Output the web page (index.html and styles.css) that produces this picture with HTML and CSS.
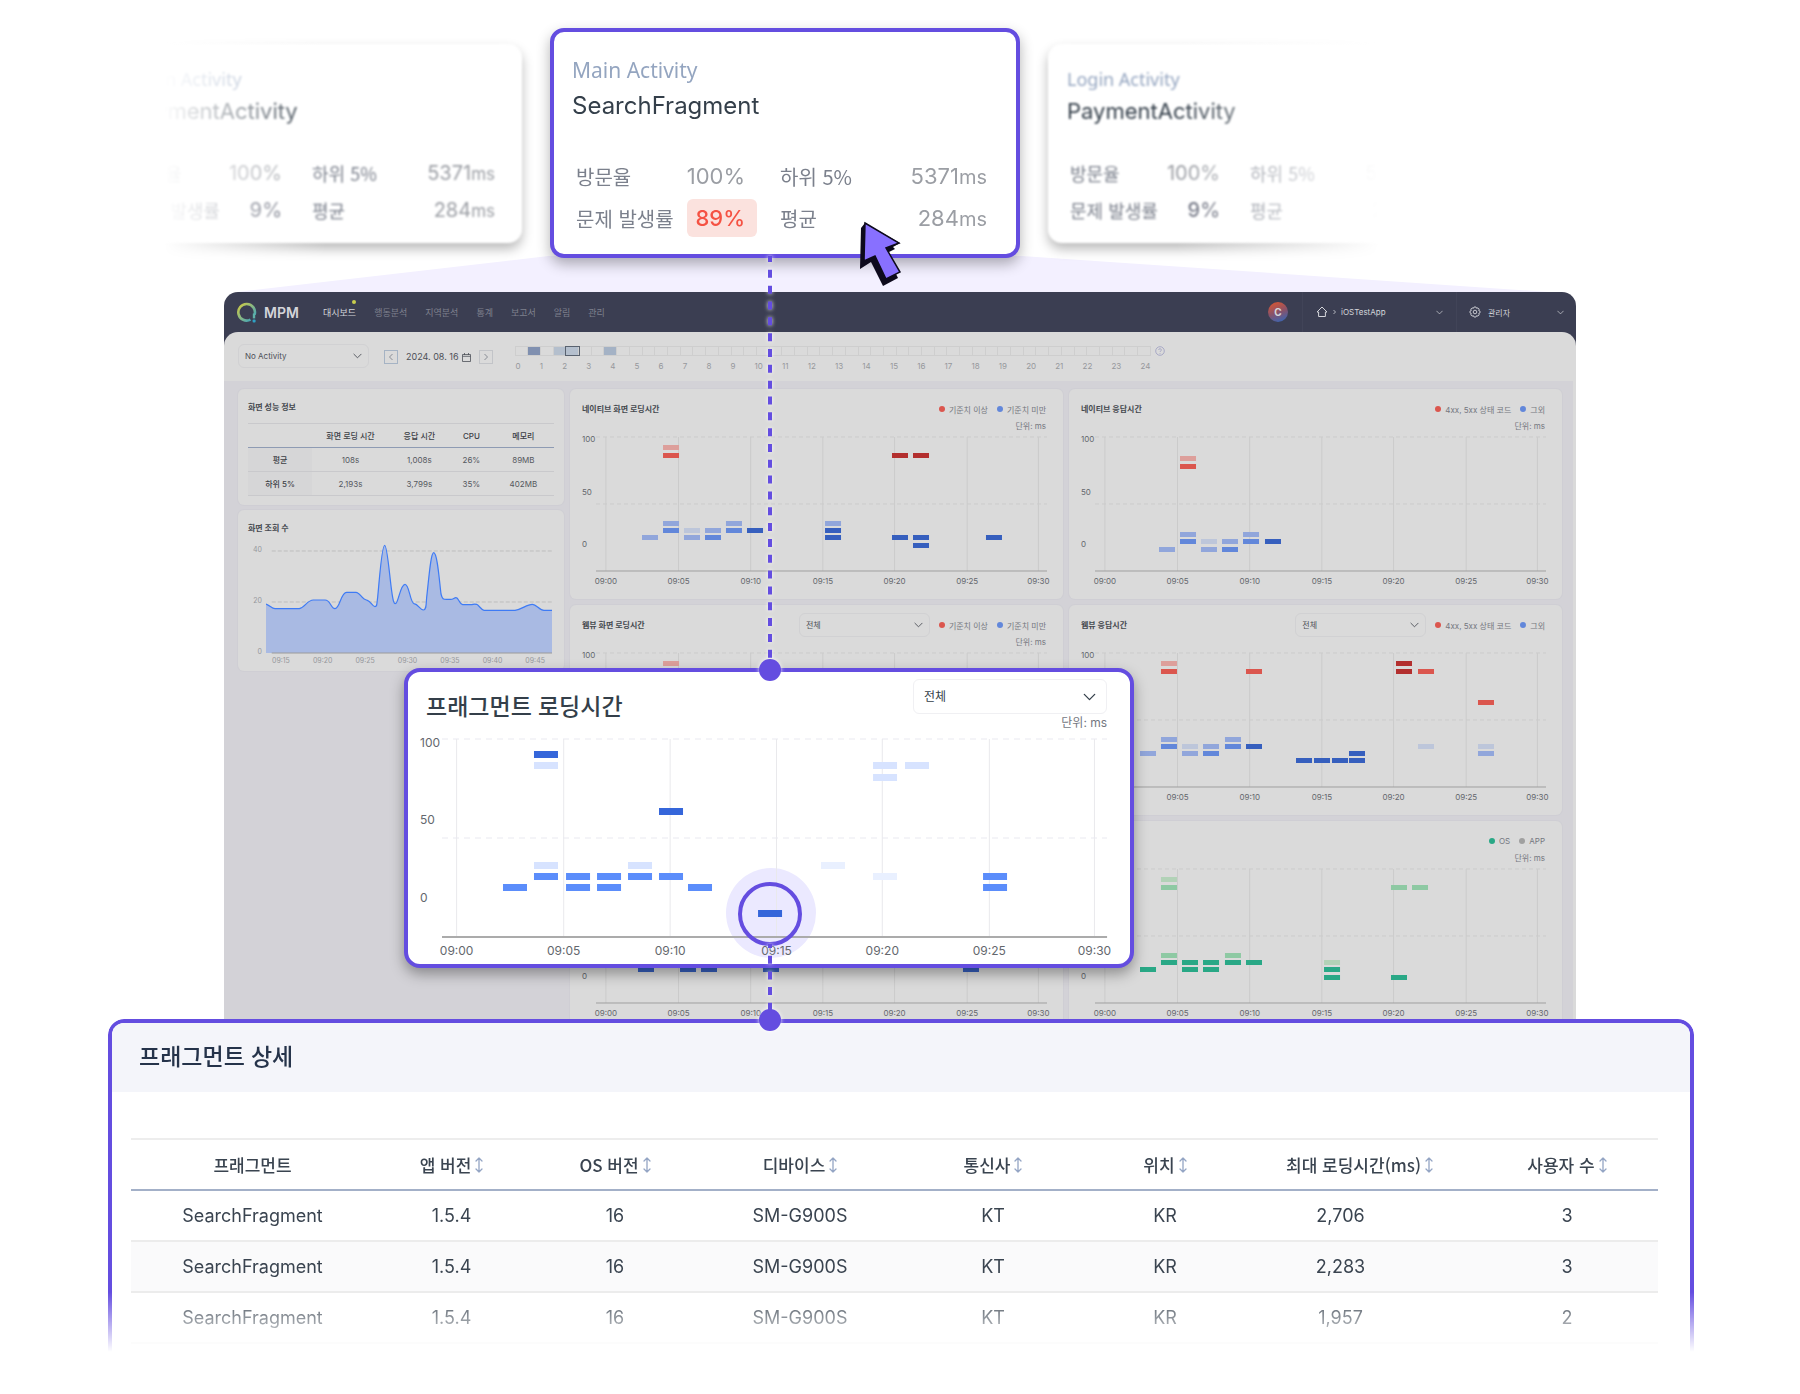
FILE: index.html
```html
<!DOCTYPE html>
<html lang="ko">
<head>
<meta charset="utf-8">
<meta name="viewport" content="width=device-width, initial-scale=1">
<title>MPM 대시보드</title>
<link rel="stylesheet" href="styles.css">
</head>
<body>
<svg class="sprite" aria-hidden="true">
  <symbol id="chevron" viewBox="0 0 10 6"><path d="M1 1l4 4 4-4" fill="none" stroke="currentColor" stroke-linecap="round" stroke-linejoin="round"/></symbol>
  <symbol id="sort" viewBox="0 0 8 16"><path d="M4 1v14M1 4l3-3 3 3M1 12l3 3 3-3" fill="none" stroke="currentColor" stroke-width="1.3" stroke-linecap="round" stroke-linejoin="round"/></symbol>
</svg>
<main class="scene">

  <section class="carousel" aria-label="액티비티">
    <article class="activity activity-side">
      <p class="activity-kind">Login Activity</p>
      <h2 class="activity-name">PaymentActivity</h2>
      <dl class="stats">
        <dt>방문율</dt><dd>100%</dd>
        <dt>하위 5%</dt><dd>5371<small>ms</small></dd>
        <dt>문제 발생률</dt><dd class="strong">9%</dd>
        <dt>평균</dt><dd>284<small>ms</small></dd>
      </dl>
    </article>
    <article class="activity activity-main">
      <p class="activity-kind">Main Activity</p>
      <h2 class="activity-name">SearchFragment</h2>
      <dl class="stats">
        <dt>방문율</dt><dd>100%</dd>
        <dt>하위 5%</dt><dd>5371<small>ms</small></dd>
        <dt>문제 발생률</dt><dd><span class="alert">89%</span></dd>
        <dt>평균</dt><dd>284<small>ms</small></dd>
      </dl>
      <svg class="cursor" viewBox="0 0 44 68" aria-hidden="true">
        <path d="M7 2L3 7L2 48L13 41L25 65L40 57L38 53L41 51L29 32L37 28L35 26L42 22Z" fill="#0d0a1c"/>
        <path d="M7 2L41 22L28 27L42 51L28 58L17 35L6 40Z" fill="#8870ff" stroke="#0d0a1c" stroke-width="1.5"/>
      </svg>
    </article>
    <article class="activity activity-side">
      <p class="activity-kind">Login Activity</p>
      <h2 class="activity-name">PaymentActivity</h2>
      <dl class="stats">
        <dt>방문율</dt><dd>100%</dd>
        <dt>하위 5%</dt><dd>5371<small>ms</small></dd>
        <dt>문제 발생률</dt><dd class="strong">9%</dd>
        <dt>평균</dt><dd>284<small>ms</small></dd>
      </dl>
    </article>
  </section>

  <div class="beam"></div>

  <section class="dashboard">
    <header class="topbar">
      <a class="brand" href="#">
        <svg class="brand-mark" viewBox="0 0 20 21" aria-hidden="true">
          <defs><linearGradient id="ring" x1="0" y1="0" x2="1" y2="1"><stop offset="0.1" stop-color="#c3c84e"/><stop offset="0.55" stop-color="#7fb58c"/><stop offset="1" stop-color="#2fa0c4"/></linearGradient></defs>
          <path d="M13.5 17.6A8.3 8.3 0 1 1 17.6 12.6" fill="none" stroke="url(#ring)" stroke-width="2.6"/>
          <path d="M17 11.5V16.4" stroke="#5fb0a8" stroke-width="2.4"/>
          <rect x="15.6" y="17.6" width="3" height="3" rx="1" fill="#2fa0c4"/>
        </svg>
        <span>MPM</span>
      </a>
      <nav class="menu">
        <a class="active" href="#">대시보드</a><a href="#">행동분석</a><a href="#">지역분석</a><a href="#">통계</a><a href="#">보고서</a><a href="#">알림</a><a href="#">관리</a>
      </nav>
      <span class="avatar">C</span>
      <button class="top-select app-select" type="button">
        <svg width="12" height="12" viewBox="0 0 12 12" aria-hidden="true"><path d="M6 1L11 6H9.4V10.5H2.6V6H1Z" fill="none" stroke="currentColor" stroke-linejoin="round"/></svg>
        <svg width="3" height="6" viewBox="0 0 3 6" aria-hidden="true"><path d="M.5 1L2.5 3L.5 5" fill="none" stroke="currentColor" stroke-width=".8"/></svg>
        <span>iOSTestApp</span>
        <svg class="push" width="7" height="5"><use href="#chevron"/></svg>
      </button>
      <button class="top-select user-select" type="button">
        <svg width="12" height="12" viewBox="0 0 12 12" fill="none" stroke="currentColor" aria-hidden="true"><path d="M5 1H7L7.6 2.3L9 1.9L10.2 3.1L9.7 4.5L11 5.1V6.9L9.7 7.5L10.2 8.9L9 10.1L7.6 9.7L7 11H5L4.4 9.7L3 10.1L1.8 8.9L2.3 7.5L1 6.9V5.1L2.3 4.5L1.8 3.1L3 1.9L4.4 2.3Z" stroke-width=".9" stroke-linejoin="round"/><circle cx="6" cy="6" r="1.8" stroke-width=".9"/></svg>
        <span>관리자</span>
        <svg class="push" width="7" height="5"><use href="#chevron"/></svg>
      </button>
    </header>

    <div class="toolbar">
      <div class="select small-select">
        <select aria-label="액티비티 선택"><option>No Activity</option></select>
        <svg width="9" height="6"><use href="#chevron"/></svg>
      </div>
      <div class="date-picker">
        <button class="step step-prev" type="button" aria-label="이전 날짜"><svg width="4" height="8" viewBox="0 0 4 8"><path d="M3.5 1L.5 4L3.5 7" fill="none" stroke="currentColor"/></svg></button>
        <span class="date">2024. 08. 16
          <svg width="9" height="9" viewBox="0 0 9 9" aria-hidden="true"><path d="M.5 1.5H8.5V8.5H.5ZM.5 3.3H8.5M2.5 0V2M6.5 0V2" fill="none" stroke="currentColor" stroke-width=".8"/></svg>
        </span>
        <button class="step" type="button" aria-label="다음 날짜"><svg width="4" height="8" viewBox="0 0 4 8"><path d="M.5 1L3.5 4L.5 7" fill="none" stroke="currentColor"/></svg></button>
      </div>
      <div class="timeline">
        <div class="cells" id="cells"></div>
        <div class="hours" id="hours"></div>
      </div>
      <svg class="help" viewBox="0 0 10 10" aria-hidden="true"><circle cx="5" cy="5" r="4.3" fill="none" stroke="currentColor" stroke-width=".8"/><path d="M3.7 4a1.3 1.3 0 1 1 1.8 1.2q-.5.2-.5.8M5 7v.8" fill="none" stroke="currentColor" stroke-width=".8"/></svg>
    </div>

    <div class="board">
      <div class="side">
        <section class="panel summary">
          <h3>화면 성능 정보</h3>
          <table class="summary-table">
            <thead><tr><th></th><th>화면 로딩 시간</th><th>응답 시간</th><th>CPU</th><th>메모리</th></tr></thead>
            <tbody>
              <tr><th scope="row">평균</th><td>108s</td><td>1,008s</td><td>26%</td><td>89MB</td></tr>
              <tr><th scope="row">하위 5%</th><td>2,193s</td><td>3,799s</td><td>35%</td><td>402MB</td></tr>
            </tbody>
          </table>
        </section>
        <section class="panel views">
          <h3>화면 조회 수</h3>
          <div class="views-body">
            <div class="views-axis"><span>40</span><span>20</span><span>0</span></div>
            <svg class="views-plot" aria-hidden="true">
              <line class="dash" x1="2%" x2="100%" y1="7" y2="7"/>
              <line class="dash" x1="2%" x2="100%" y1="58" y2="58"/>
              <svg width="100%" height="109" viewBox="168 190 858 327" preserveAspectRatio="none">
                <path class="area" d="M168 370C180 374 185 384 195 384L268 384C285 380 292 358 310 358L345 358C362 358 362 384 375 384C390 384 392 335 410 335L438 335C450 335 455 357 472 359C482 362 488 378 495 378C502 378 500 370 503 350C508 300 515 194 524 194C533 194 540 310 548 350C551 370 555 370 558 368C566 360 572 311 585 311C598 311 600 365 612 369C625 371 630 388 640 388C650 388 648 370 650 350C656 300 662 216 671 216C682 216 688 300 693 340C697 356 700 356 710 356L722 356C730 356 732 351 738 351C746 351 748 371 758 372L785 372C792 369 796 370 800 371C808 375 814 388 822 389L915 389C935 387 950 371 967 371C980 371 988 389 1002 389L1026 389V517H168Z"/>
                <path class="curve" d="M168 370C180 374 185 384 195 384L268 384C285 380 292 358 310 358L345 358C362 358 362 384 375 384C390 384 392 335 410 335L438 335C450 335 455 357 472 359C482 362 488 378 495 378C502 378 500 370 503 350C508 300 515 194 524 194C533 194 540 310 548 350C551 370 555 370 558 368C566 360 572 311 585 311C598 311 600 365 612 369C625 371 630 388 640 388C650 388 648 370 650 350C656 300 662 216 671 216C682 216 688 300 693 340C697 356 700 356 710 356L722 356C730 356 732 351 738 351C746 351 748 371 758 372L785 372C792 369 796 370 800 371C808 375 814 388 822 389L915 389C935 387 950 371 967 371C980 371 988 389 1002 389L1026 389"/>
              </svg>
              <line class="base" x1="2%" x2="100%" y1="109" y2="109"/>
            </svg>
          </div>
          <div class="views-times"><span>09:15</span><span>09:20</span><span>09:25</span><span>09:30</span><span>09:35</span><span>09:40</span><span>09:45</span></div>
        </section>
      </div>

      <div class="grid">
        <section class="panel chart">
          <header><h3>네이티브 화면 로딩시간</h3><span class="key red">기준치 이상</span><span class="key blue">기준치 미만</span></header>
          <p class="unit">단위: ms</p>
          <svg class="plot" data-chart="nativeLoad"></svg>
        </section>
        <section class="panel chart">
          <header><h3>네이티브 응답시간</h3><span class="key red">4xx, 5xx 상태 코드</span><span class="key blue">그외</span></header>
          <p class="unit">단위: ms</p>
          <svg class="plot" data-chart="nativeResponse"></svg>
        </section>
        <section class="panel chart">
          <header><h3>웹뷰 화면 로딩시간</h3>
            <div class="select small-select"><select aria-label="웹뷰 화면"><option>전체</option></select><svg width="9" height="6"><use href="#chevron"/></svg></div>
            <span class="key red">기준치 이상</span><span class="key blue">기준치 미만</span></header>
          <p class="unit">단위: ms</p>
          <svg class="plot" data-chart="webLoad"></svg>
        </section>
        <section class="panel chart">
          <header><h3>웹뷰 응답시간</h3>
            <div class="select small-select"><select aria-label="웹뷰 응답"><option>전체</option></select><svg width="9" height="6"><use href="#chevron"/></svg></div>
            <span class="key red">4xx, 5xx 상태 코드</span><span class="key blue">그외</span></header>
          <p class="unit"></p>
          <svg class="plot" data-chart="webResponse"></svg>
        </section>
        <section class="panel chart">
          <header></header>
          <p class="unit"></p>
          <svg class="plot" data-chart="cpu"></svg>
        </section>
        <section class="panel chart">
          <header><span class="key green">OS</span><span class="key grey">APP</span></header>
          <p class="unit">단위: ms</p>
          <svg class="plot" data-chart="memory"></svg>
        </section>
      </div>
    </div>

    <section class="popup">
      <header>
        <h2>프래그먼트 로딩시간</h2>
        <div class="popup-filter">
          <div class="select large-select"><select aria-label="프래그먼트"><option>전체</option></select><svg width="13" height="8"><use href="#chevron"/></svg></div>
          <p class="unit">단위: ms</p>
        </div>
      </header>
      <div class="halo"></div>
      <svg class="plot plot-large" data-chart="fragment"></svg>
      <div class="ring"></div>
    </section>
    <svg class="connector connector-top" aria-hidden="true">
      <line x1="13" x2="13" y1="0" y2="414" stroke-dasharray="8 7.83" stroke-dashoffset="2"/><circle cx="13" cy="414" r="11"/>
    </svg>
    <svg class="connector connector-bottom" aria-hidden="true">
      <line x1="13" x2="13" y1="0" y2="76" stroke-dasharray="8 7.7" stroke-dashoffset="4"/><circle cx="13" cy="76" r="11"/>
    </svg>
  </section>

  <section class="detail">
    <header><h2>프래그먼트 상세</h2></header>
    <table class="detail-table">
      <colgroup><col class="c-fragment"><col class="c-app"><col class="c-os"><col class="c-device"><col class="c-carrier"><col class="c-place"><col class="c-time"><col class="c-users"></colgroup>
      <thead><tr>
        <th>프래그먼트</th>
        <th><button type="button">앱 버전<svg><use href="#sort"/></svg></button></th>
        <th><button type="button">OS 버전<svg><use href="#sort"/></svg></button></th>
        <th><button type="button">디바이스<svg><use href="#sort"/></svg></button></th>
        <th><button type="button">통신사<svg><use href="#sort"/></svg></button></th>
        <th><button type="button">위치<svg><use href="#sort"/></svg></button></th>
        <th><button type="button">최대 로딩시간(ms)<svg><use href="#sort"/></svg></button></th>
        <th><button type="button">사용자 수<svg><use href="#sort"/></svg></button></th>
      </tr></thead>
      <tbody>
        <tr><td>SearchFragment</td><td>1.5.4</td><td>16</td><td>SM-G900S</td><td>KT</td><td>KR</td><td class="time">2,706</td><td>3</td></tr>
        <tr><td>SearchFragment</td><td>1.5.4</td><td>16</td><td>SM-G900S</td><td>KT</td><td>KR</td><td class="time">2,283</td><td>3</td></tr>
        <tr><td>SearchFragment</td><td>1.5.4</td><td>16</td><td>SM-G900S</td><td>KT</td><td>KR</td><td class="time">1,957</td><td>2</td></tr>
      </tbody>
    </table>
  </section>
</main>
<script src="charts.js"></script>
</body>
</html>
```
FILE: styles.css
```css
:root {
  --violet: #644de0;
  --card: #dadada;
  --ink: #343f4a;
  --cjk: "Noto Sans CJK KR", sans-serif;
  --ui: Inter, "Noto Sans CJK KR", sans-serif;
}
* { box-sizing: border-box; }
body { margin: 0; background: #fff; font-family: var(--ui); color: var(--ink); }
h2, h3, p, dl, dd { margin: 0; font-weight: 400; }
button, select { font: inherit; color: inherit; background: none; border: 0; padding: 0; margin: 0; }
a { color: inherit; text-decoration: none; }
table { border-collapse: collapse; width: 100%; table-layout: fixed; }
.sprite { display: none; }
.scene { min-width: 1500px; overflow: hidden; }

/* activity cards */
.carousel {
  position: relative; z-index: 2; display: flex; align-items: center; gap: 28px;
  width: max-content; margin-left: 110px; padding: 28px 0 36px;
  -webkit-mask-image: linear-gradient(to right, transparent 4%, #000 16%, #000 79%, transparent 94%);
  mask-image: linear-gradient(to right, transparent 4%, #000 16%, #000 79%, transparent 94%);
}
.activity { background: #fff; border-radius: 14px; }
.activity-kind { font-family: "Noto Sans", sans-serif; color: #94a5c0; }
.activity-main { position: relative; width: 470px; height: 230px; padding: 24px 29px 0 18px; border: 4px solid var(--violet); box-shadow: 0 6px 14px rgba(0, 0, 0, .3); }
.activity-main .activity-kind { font-size: 21px; line-height: 28px; }
.activity-main .activity-name { font-size: 24px; line-height: 44px; }
.stats { display: grid; align-items: center; color: #9b9ea4; }
.stats dt { font-family: var(--cjk); color: #7b808c; white-space: nowrap; }
.stats dd { text-align: right; }
.activity-main .stats { grid-template-columns: 102px 67px 72px 1fr; grid-auto-rows: 42px; padding-left: 4px; margin-top: 27px; font-size: 22px; }
.activity-main .stats dt { font-size: 20px; }
.activity-main .stats dt:nth-of-type(even) { margin-left: 35px; }
.activity-main small { font-size: 20px; }
.alert { display: inline-block; margin: 0 -12px 0 -8px; padding: 0 12px 0 8px; line-height: 38px; border-radius: 6px; background: #fbe2de; color: #f55243; font-weight: 500; }
.activity-side { flex: none; width: 412px; height: 199px; padding: 22px 27px 0 19px; box-shadow: 0 6px 12px rgba(0, 0, 0, .28); filter: blur(1px); }
.activity-side .activity-kind { font-size: 18px; line-height: 26px; }
.activity-side .activity-name { font-size: 22px; line-height: 38px; }
.activity-side .stats { grid-template-columns: 92px 58px 72px 1fr; grid-auto-rows: 37px; padding-left: 3px; margin-top: 25px; font-size: 20px; }
.activity-side .stats dt { font-size: 18px; }
.activity-side .stats dt:nth-of-type(even) { margin-left: 30px; }
.activity-side small { font-size: 17px; }
.stats .strong { color: #6e7280; font-weight: 500; }
.cursor { position: absolute; left: 304px; top: 189px; width: 44px; height: 68px; }

.beam { height: 36px; margin: -38px 224px 0; background: #f3f0ff; clip-path: polygon(1% 100%, 24% 0, 59% 0, 98% 100%); }

/* dashboard shell */
.dashboard { position: relative; margin: 0 224px; background: #3b3e52; border-radius: 14px 14px 0 0; }
.topbar { display: flex; align-items: center; height: 40px; padding-left: 13px; color: #d4d5da; font-size: 9px; }
.brand { display: flex; align-items: center; gap: 7px; width: 86px; font-size: 14px; font-weight: 600; }
.brand-mark { width: 20px; height: 21px; }
.menu { display: flex; gap: 18px; color: #7f818e; }
.menu .active { position: relative; color: #d4d5da; }
.menu .active::after { content: ""; position: absolute; right: 0; top: -6px; width: 4px; height: 4px; border-radius: 50%; background: #c9ce4d; }
.avatar { margin-left: auto; margin-right: 14px; width: 20px; height: 20px; border-radius: 50%; background: linear-gradient(160deg, #c8553d 15%, #8a5268 50%, #3466b8 95%); font-size: 10px; line-height: 20px; font-weight: 700; text-align: center; }
.top-select { display: flex; align-items: center; gap: 5px; height: 40px; border-left: 1px solid #414458; font-size: 8px; }
.app-select { width: 154px; padding: 0 13px; }
.user-select { width: 120px; padding: 0 12px; gap: 7px; }
.push { margin-left: auto; }
.toolbar { display: flex; align-items: flex-start; height: 49px; padding: 12px 14px 0; background: var(--card); border-radius: 14px 14px 0 0; color: #4d5058; }
.select { position: relative; display: flex; align-items: center; }
.select select { appearance: none; width: 100%; border: 1px solid #d1d1d3; outline: none; }
.select svg { position: absolute; pointer-events: none; }
.small-select { width: 131px; flex: none; }
.small-select select { height: 24px; padding: 0 6px; border-radius: 6px; font-size: 8px; }
.small-select svg { right: 7px; }
.date-picker { display: flex; align-items: center; gap: 8px; margin: 6px 0 0 15px; font-size: 9px; }
.date { display: flex; align-items: center; gap: 3px; line-height: 14px; white-space: nowrap; }
.step { display: flex; align-items: center; justify-content: center; width: 14px; height: 14px; border: 1px solid #c2c4c8; color: #888c94; }
.step-prev { border-color: #a5b3c4; }
.timeline { width: 636px; margin: 2px 0 0 22px; }
.cells { display: flex; height: 10px; border: 1px solid #cecece; border-right: 0; }
.cells i { flex: 1; border-right: 1px solid #cecece; }
.cells .high { background: #8090b0; }
.cells .low { background: #b4bfcd; }
.cells .mid { background: #a4b2c5; }
.cells .now { background: #b4bfcd; outline: 1px solid #59626f; }
.hours { display: flex; justify-content: space-between; padding-left: 1px; margin-top: 5px; font-size: 8px; line-height: 10px; color: #96989c; }
.help { width: 10px; height: 10px; margin: 2px 0 0 4px; color: #9a9cc0; }

.board { display: grid; grid-template-columns: minmax(0, 326fr) minmax(0, 992fr); gap: 6px; align-items: start; padding: 8px 11px 14px 14px; background: #d3d2d7; border-right: 3px solid var(--card); }
.side { display: grid; grid-template-columns: minmax(0, 1fr); gap: 5px; }
.grid { display: grid; grid-template-columns: 1fr 1fr; gap: 6px; }
.panel { background: var(--card); border-radius: 6px; box-shadow: 0 0 0 1px #cfced4; }
.panel h3 { font-size: 8px; line-height: 12px; font-weight: 700; color: #45494f; }

.summary { height: 116px; padding: 12px 10px 0; }
.summary-table { margin-top: 10px; font-size: 8px; color: #55585e; border-top: 1px solid #c9c9cc; }
.summary-table tr { height: 24px; border-bottom: 1px solid #c9c9cc; }
.summary-table thead tr { border-bottom: 1px solid #8e9bb3; }
.summary-table th, .summary-table td { padding: 0; text-align: center; }
.summary-table th { font-weight: 500; color: #3c4046; }
.summary-table th:first-child { width: 21%; }
.summary-table th:nth-child(2) { width: 25%; }
.summary-table th:nth-child(3) { width: 20%; }
.summary-table th:nth-child(4) { width: 14%; }
.summary-table tbody th { background: #d6d6d7; }

.views { height: 161px; padding: 12px 12px 0 10px; }
.views-body { display: flex; align-items: flex-start; height: 109px; margin-top: 10px; }
.views-axis { display: flex; flex: none; flex-direction: column; justify-content: space-between; width: 18px; height: 113px; padding: 1px 4px 0 0; font-size: 7px; line-height: 10px; text-align: right; color: #96989c; }
.views-plot { flex: 1; min-width: 0; height: 109px; overflow: visible; }
.views-plot .dash { stroke: #bdbdbd; stroke-dasharray: 4 2; }
.area { fill: #a9bae3; }
.curve { fill: none; stroke: #3e7bf5; stroke-width: 1.2; vector-effect: non-scaling-stroke; }
.base { stroke: #9a9a9a; }
.views-times { display: flex; justify-content: space-between; padding: 3px 7px 0 24px; font-size: 7px; line-height: 9px; color: #96989c; }

.chart { height: 210px; padding-top: 8px; }
.chart header { display: flex; align-items: center; height: 24px; padding: 0 17px 0 12px; font-size: 8px; color: #74777f; }
.chart header > :first-child { margin-right: auto; }
.chart header > .key:first-child { margin-left: auto; margin-right: 0; }
.chart .small-select { color: #4d5058; }
.key { display: flex; align-items: center; gap: 4px; margin-left: 9px; white-space: nowrap; }
.key::before { content: ""; width: 6px; height: 6px; border-radius: 50%; background: currentColor; }
.red::before { background: #db564e; }
.blue::before { background: #6287da; }
.green::before { background: #29a886; }
.grey::before { background: #a0a0a0; }
.unit { text-align: right; color: #74777f; }
.chart .unit { height: 16px; padding-right: 17px; font-size: 8px; line-height: 10px; }
.plot { display: block; width: calc(100% - 42px); height: 134px; margin-left: 26px; overflow: visible; font-size: 8px; fill: #64676d; }
.plot .v { stroke: #cbcbcb; }
.plot .h { stroke: #cbcbcb; stroke-dasharray: 4 3; }
.plot .axis { stroke: #9f9f9f; }

/* fragment popup */
.popup { position: absolute; left: 180px; top: 376px; width: 54%; height: 300px; padding: 7px 23px 0 34px; background: #fff; border: 4px solid var(--violet); border-radius: 16px; box-shadow: 0 6px 14px rgba(0, 0, 0, .35); }
.popup header { display: flex; justify-content: space-between; height: 60px; margin-left: -16px; }
.popup h2 { padding-top: 11px; font-size: 23px; line-height: 34px; font-weight: 500; }
.popup .unit { font-size: 12px; line-height: 18px; }
.large-select { width: 194px; }
.large-select select { height: 35px; padding: 0 10px; border: 1px solid #f0f0f3; border-radius: 6px; font-size: 12px; }
.large-select svg { right: 11px; }
.plot-large { position: relative; width: 100%; height: 198px; margin: 0; font-size: 12px; }
.plot-large .v { stroke: #e9e9ec; }
.plot-large .h { stroke: #e9e9f0; stroke-dasharray: 6 5; }
.plot-large .axis { stroke: #ababab; stroke-width: 2; }
.halo { position: absolute; left: calc(50% - 43px); top: 196px; width: 90px; height: 90px; border-radius: 50%; background: #ebe9ff; }
.ring { position: absolute; left: calc(50% - 31px); top: 210px; width: 64px; height: 64px; border: 4px solid var(--violet); border-radius: 50%; }
.connector { position: absolute; z-index: 3; left: calc(180px + 27% - 12px); width: 26px; overflow: visible; stroke: var(--violet); stroke-width: 4; fill: var(--violet); filter: drop-shadow(0 0 2px rgba(255, 255, 255, .9)); }
.connector circle { stroke: none; }
.connector-top { top: -36px; height: 425px; }
.connector-bottom { top: 652px; height: 87px; }

/* fragment detail */
.detail {
  position: relative; z-index: 1; margin: -26px 106px 0 108px; padding-bottom: 8px; background: #fff;
  border: 4px solid var(--violet); border-bottom: 0; border-radius: 16px 16px 0 0;
  -webkit-mask-image: linear-gradient(to top, transparent, #000 60px); mask-image: linear-gradient(to top, transparent, #000 60px);
}
.detail header { height: 69px; padding: 17px 27px; background: #f4f5fa; border-radius: 12px 12px 0 0; }
.detail h2 { font-size: 23px; line-height: 34px; font-weight: 500; color: #25334a; }
.detail-table { width: calc(100% - 51px); margin: 46px 0 0 19px; border-top: 2px solid #ededed; font-size: 18px; color: #3a4450; }
.detail-table th, .detail-table td { padding: 0; text-align: center; }
.detail-table thead tr { height: 51px; border-bottom: 2px solid #a3b0c8; }
.detail-table tbody tr { height: 51px; border-bottom: 2px solid #ececec; }
.detail-table tbody tr:nth-child(2) { background: #fafafb; }
.detail-table th { font-family: var(--cjk); font-size: 17px; font-weight: 500; }
.detail-table button { display: inline-flex; align-items: center; gap: 4px; white-space: nowrap; }
.detail-table button svg { width: 8px; height: 16px; color: #94a5c4; }
.detail-table .time { padding-right: 38px; }
.c-fragment { width: 243px; }
.c-app { width: 155px; }
.c-os { width: 172px; }
.c-device { width: 198px; }
.c-carrier { width: 188px; }
.c-place { width: 156px; }
.c-time { width: 233px; }
.c-users { width: 182px; }
```
FILE: charts.js
```js
const colors = {
  pink: '#dd9f9b', red: '#db564e', wine: '#b32f2e',
  pale: '#bdc6da', light: '#91a6db', mid: '#6287da', deep: '#365fbe',
  mint: '#b2d2b7', leaf: '#8ec9a3', green: '#29a886',
  navy: '#3566da', azure: '#5b8dfb', sky: '#d7e3ff', ice: '#e9f0ff'
};

// Each series: colour, then rows of [y, x, x, ...]
const charts = {
  nativeLoad: [['pink', [10, 67]], ['red', [18, 67]], ['wine', [18, 296, 317]],
    ['light', [86, 67, 130, 229], [93, 109], [100, 46, 88]], ['pale', [93, 88]],
    ['mid', [93, 67, 130], [100, 109]], ['deep', [93, 151, 229], [100, 229, 296, 317, 390], [108, 317]]],
  nativeResponse: [['pink', [21, 85]], ['red', [29, 85]],
    ['light', [97, 85, 148], [104, 127], [112, 64, 106]], ['pale', [104, 106]],
    ['mid', [104, 85, 148], [112, 127]], ['deep', [104, 170]]],
  webLoad: [['pink', [10, 67]], ['red', [18, 67]]],
  webResponse: [['pink', [10, 66]], ['red', [18, 66, 151, 323], [49, 383]], ['wine', [10, 301], [18, 301]],
    ['light', [86, 66, 130], [93, 108], [100, 45, 87, 383]], ['pale', [93, 87, 323, 383]],
    ['mid', [93, 66, 130], [100, 108]], ['deep', [93, 151], [100, 254], [107, 201, 219, 237, 254]]],
  cpu: [['deep', [100, 42, 84, 105, 167, 367]]],
  memory: [['mint', [10, 66], [93, 229]], ['leaf', [18, 66, 296, 317], [86, 66, 130]],
    ['green', [93, 66, 87, 108, 130, 151], [100, 45, 87, 108, 229], [108, 229, 296]]],
  fragment: [['navy', [15, 92], [72, 217], [174, 316]],
    ['sky', [26, 92, 431, 463], [38, 431], [126, 92, 186]], ['ice', [126, 379], [137, 431]],
    ['azure', [137, 92, 124, 155, 186, 217, 541], [148, 61, 124, 155, 246, 541]]]
};

// Labels for charts that sit partly under the popup: value labels, then first and last time tick
const labelled = {
  webLoad: [['100'], 7, 7],
  webResponse: [['100'], 1, 7],
  cpu: [['0'], 0, 7],
  memory: [['0'], 0, 7]
};

const ticks = [2.2, 18.3, 34.3, 50.3, 66.2, 82.3, 98.1];

document.querySelectorAll('[data-chart]').forEach(svg => {
  const name = svg.dataset.chart;
  const s = name === 'fragment'
    ? { span: 665, h: 198, w: 24, bar: 7, labelX: -22, labelY: [3, 80, 158], time: 211 }
    : { span: 451, h: 134, w: 16, bar: 5, labelX: -14, labelY: [2, 55, 107], time: 144 };
  const [values, from, to] = labelled[name] || [['100', '50', '0'], 0, 7];
  let out = '';
  ticks.forEach(t => { out += `<line class="v" x1="${t}%" x2="${t}%" y1="0" y2="${s.h}"/>`; });
  [0, s.h / 2].forEach(y => { out += `<line class="h" x1="0" x2="100%" y1="${y}" y2="${y}"/>`; });
  charts[name].forEach(([color, ...rows]) => rows.forEach(([y, ...xs]) => xs.forEach(x => {
    out += `<rect x="${(x / s.span * 100).toFixed(2)}%" y="${y - (s.bar - 1) / 2}" width="${s.w}" height="${s.bar}" fill="${colors[color]}"/>`;
  })));
  out += `<line class="axis" x1="0" x2="100%" y1="${s.h}" y2="${s.h}"/>`;
  ['100', '50', '0'].forEach((n, i) => {
    if (values.includes(n)) out += `<text x="${s.labelX}" y="${s.labelY[i]}" dominant-baseline="central">${n}</text>`;
  });
  ticks.forEach((t, i) => {
    if (i < from || i >= to) return;
    const label = '09:' + String(i * 5).padStart(2, '0');
    out += `<text x="${t}%" y="${s.time}" text-anchor="middle" dominant-baseline="central">${label}</text>`;
  });
  svg.innerHTML = out;
});

const marks = { 1: 'high', 3: 'low', 4: 'now', 7: 'mid' };
document.getElementById('cells').innerHTML =
  Array.from({ length: 50 }, (_, i) => `<i class="${marks[i] || ''}"></i>`).join('');
document.getElementById('hours').innerHTML =
  Array.from({ length: 25 }, (_, i) => `<span>${i}</span>`).join('');
```
